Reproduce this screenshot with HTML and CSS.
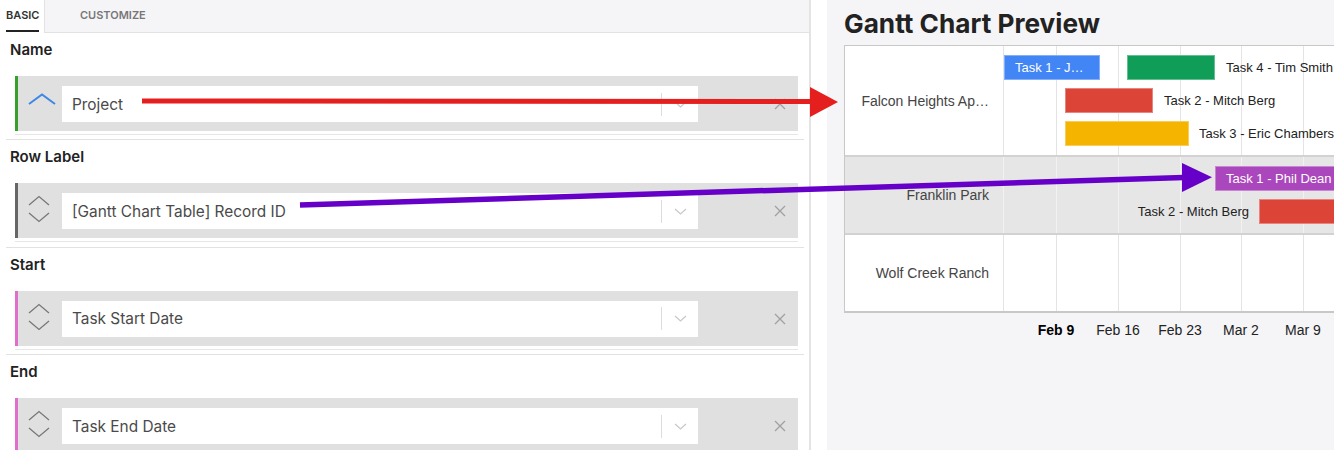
FILE: index.html
```html
<!DOCTYPE html>
<html lang="en">
<head>
  <meta charset="UTF-8">
  <title>Gantt Chart Settings</title>
  <link rel="stylesheet" href="styles.css">
</head>
<body>
  <div class="page">
    <section class="config">
      <nav class="tabs">
        <div class="tab tab-active"><span>BASIC</span></div>
        <div class="tab">CUSTOMIZE</div>
      </nav>

      <div class="field">
        <h3>Name</h3>
        <div class="slot-wrap">
          <div class="slot slot-green">
            <div class="handle handle-single">
              <svg width="28" height="12" viewBox="0 0 28 12"><path d="M1 11 L14 1.5 L27 11" fill="none" stroke="#3d87e6" stroke-width="2"/></svg>
            </div>
            <div class="select">
              <span class="select-value">Project</span>
              <span class="select-sep"></span>
              <span class="select-arrow"><svg width="13" height="7" viewBox="0 0 13 7"><path d="M1 1 L6.5 6 L12 1" fill="none" stroke="#c8c8c8" stroke-width="1.2"/></svg></span>
            </div>
            <div class="remove"><svg width="12" height="12" viewBox="0 0 12 12"><path d="M1 1 L11 11 M11 1 L1 11" stroke="#a0a0a0" stroke-width="1.3"/></svg></div>
          </div>
        </div>
      </div>

      <div class="field">
        <h3>Row Label</h3>
        <div class="slot-wrap">
          <div class="slot slot-gray">
            <div class="handle handle-double">
              <svg width="22" height="28" viewBox="0 0 22 28"><path d="M1 10 L11 1.5 L21 10 M1 18 L11 26.5 L21 18" fill="none" stroke="#777" stroke-width="1.3"/></svg>
            </div>
            <div class="select">
              <span class="select-value">[Gantt Chart Table] Record ID</span>
              <span class="select-sep"></span>
              <span class="select-arrow"><svg width="13" height="7" viewBox="0 0 13 7"><path d="M1 1 L6.5 6 L12 1" fill="none" stroke="#c8c8c8" stroke-width="1.2"/></svg></span>
            </div>
            <div class="remove"><svg width="12" height="12" viewBox="0 0 12 12"><path d="M1 1 L11 11 M11 1 L1 11" stroke="#a0a0a0" stroke-width="1.3"/></svg></div>
          </div>
        </div>
      </div>

      <div class="field">
        <h3>Start</h3>
        <div class="slot-wrap">
          <div class="slot slot-pink">
            <div class="handle handle-double">
              <svg width="22" height="28" viewBox="0 0 22 28"><path d="M1 10 L11 1.5 L21 10 M1 18 L11 26.5 L21 18" fill="none" stroke="#777" stroke-width="1.3"/></svg>
            </div>
            <div class="select">
              <span class="select-value">Task Start Date</span>
              <span class="select-sep"></span>
              <span class="select-arrow"><svg width="13" height="7" viewBox="0 0 13 7"><path d="M1 1 L6.5 6 L12 1" fill="none" stroke="#c8c8c8" stroke-width="1.2"/></svg></span>
            </div>
            <div class="remove"><svg width="12" height="12" viewBox="0 0 12 12"><path d="M1 1 L11 11 M11 1 L1 11" stroke="#a0a0a0" stroke-width="1.3"/></svg></div>
          </div>
        </div>
      </div>

      <div class="field">
        <h3>End</h3>
        <div class="slot-wrap">
          <div class="slot slot-pink">
            <div class="handle handle-double">
              <svg width="22" height="28" viewBox="0 0 22 28"><path d="M1 10 L11 1.5 L21 10 M1 18 L11 26.5 L21 18" fill="none" stroke="#777" stroke-width="1.3"/></svg>
            </div>
            <div class="select">
              <span class="select-value">Task End Date</span>
              <span class="select-sep"></span>
              <span class="select-arrow"><svg width="13" height="7" viewBox="0 0 13 7"><path d="M1 1 L6.5 6 L12 1" fill="none" stroke="#c8c8c8" stroke-width="1.2"/></svg></span>
            </div>
            <div class="remove"><svg width="12" height="12" viewBox="0 0 12 12"><path d="M1 1 L11 11 M11 1 L1 11" stroke="#a0a0a0" stroke-width="1.3"/></svg></div>
          </div>
        </div>
      </div>
    </section>

    <div class="gutter"></div>

    <section class="preview">
      <h1>Gantt Chart Preview</h1>
      <div class="gantt">
        <div class="gantt-row row-tall">
          <div class="gantt-label">Falcon Heights Ap…</div>
          <div class="gantt-track">
            <div class="grid-line" style="left:52px"></div>
            <div class="grid-line" style="left:114px"></div>
            <div class="grid-line" style="left:176px"></div>
            <div class="grid-line" style="left:237px"></div>
            <div class="grid-line" style="left:299px"></div>
            <div class="bar bar-blue" style="left:0;top:9px;width:96px">Task 1 - J…</div>
            <div class="bar bar-green" style="left:123px;top:9px;width:88px"></div>
            <div class="bar-text" style="left:222px;top:9px">Task 4 - Tim Smith</div>
            <div class="bar bar-red" style="left:61px;top:42px;width:88px"></div>
            <div class="bar-text" style="left:160px;top:42px">Task 2 - Mitch Berg</div>
            <div class="bar bar-yellow" style="left:61px;top:75px;width:124px"></div>
            <div class="bar-text" style="left:195px;top:75px">Task 3 - Eric Chambers</div>
          </div>
        </div>
        <div class="gantt-row row-shaded">
          <div class="gantt-label">Franklin Park</div>
          <div class="gantt-track">
            <div class="grid-line" style="left:52px"></div>
            <div class="grid-line" style="left:114px"></div>
            <div class="grid-line" style="left:176px"></div>
            <div class="grid-line" style="left:237px"></div>
            <div class="grid-line" style="left:299px"></div>
            <div class="bar bar-purple" style="left:211px;top:9px;width:160px">Task 1 - Phil Dean</div>
            <div class="bar bar-red" style="left:255px;top:42px;width:120px"></div>
            <div class="bar-text bar-text-before" style="left:255px;top:42px">Task 2 - Mitch Berg</div>
          </div>
        </div>
        <div class="gantt-row">
          <div class="gantt-label">Wolf Creek Ranch</div>
          <div class="gantt-track">
            <div class="grid-line" style="left:52px"></div>
            <div class="grid-line" style="left:114px"></div>
            <div class="grid-line" style="left:176px"></div>
            <div class="grid-line" style="left:237px"></div>
            <div class="grid-line" style="left:299px"></div>
          </div>
        </div>
      </div>
      <div class="gantt-axis">
        <span class="tick tick-major" style="left:53px">Feb 9</span>
        <span class="tick" style="left:115px">Feb 16</span>
        <span class="tick" style="left:177px">Feb 23</span>
        <span class="tick" style="left:238px">Mar 2</span>
        <span class="tick" style="left:300px">Mar 9</span>
      </div>
    </section>

    <!-- callout arrows drawn over the screenshot -->
    <svg class="annotations" width="1334" height="450" viewBox="0 0 1334 450">
      <line x1="142" y1="101" x2="812" y2="101.5" stroke="#e51e1e" stroke-width="5"/>
      <polygon points="810,87 838,102 810,117" fill="#e51e1e"/>
      <line x1="300" y1="205" x2="1184" y2="177.6" stroke="#6600c9" stroke-width="5.5"/>
      <polygon points="1182,163 1212,177.3 1182,192" fill="#6600c9"/>
    </svg>
  </div>
</body>
</html>
```

FILE: styles.css
```css
body {
  margin: 0;
  font-family: 'Inter', 'Noto Sans', sans-serif;
  color: #222;
  background: #fff;
  overflow: hidden;
}
.page {
  position: relative;
  display: flex;
  width: 1334px;
  height: 450px;
  overflow: hidden;
}
.config {
  width: 809px;
  flex-shrink: 0;
  border-right: 2px solid #e4e4e4;
}
.tabs {
  display: flex;
  height: 33px;
  box-sizing: border-box;
  background: #f5f5f7;
  border-bottom: 1px solid #e2e2e2;
}
.tab {
  font-size: 11px;
  font-weight: 600;
  color: #777;
  line-height: 14px;
  padding: 8px 0 0 35px;
}
.tab-active {
  width: 45px;
  box-sizing: border-box;
  padding: 8px 0 0 6px;
  height: 33px;
  margin-bottom: -1px;
  background: #fff;
  border-right: 1px solid #e2e2e2;
  color: #333;
}
.tab-active span {
  display: inline-block;
  padding-bottom: 8px;
  border-bottom: 2px solid #222;
}
.field {
  margin: 0 5px 0 6px;
  padding-bottom: 4.4px;
  border-bottom: 1px solid #e2e2e2;
}
.field h3 {
  margin: 0;
  padding: 7px 0 0 4px;
  font-size: 15px;
  font-weight: 600;
  line-height: 20px;
  color: #222;
}
.slot-wrap {
  margin: 16px 6px 0 9px;
  padding-bottom: 3px;
  border-bottom: 1px solid #e6e6e6;
}
.slot {
  display: flex;
  align-items: flex-start;
  height: 55px;
  box-sizing: border-box;
  background: #e0e0e0;
  border-left: 3px solid #666;
}
.slot-green { border-left-color: #36a12a; }
.slot-gray { border-left-color: #666; }
.slot-pink { border-left-color: #e06fcb; }
.handle {
  width: 44px;
  flex-shrink: 0;
  box-sizing: border-box;
  padding-left: 10px;
}
.handle svg { display: block; }
.handle-single { margin-top: 17px; }
.handle-double { margin-top: 12px; }
.select {
  display: flex;
  align-items: center;
  width: 636px;
  height: 36px;
  margin-top: 10px;
  background: #fff;
}
.select-value {
  flex: 1;
  padding-left: 10px;
  font-size: 15.4px;
  color: #4a4a4a;
}
.select-sep {
  width: 1px;
  height: 23px;
  background: #dcdcdc;
}
.select-arrow {
  width: 36px;
  display: flex;
  justify-content: center;
}
.select-arrow svg { display: block; }
.remove {
  display: flex;
  align-items: center;
  height: 36px;
  margin-top: 10px;
  padding-left: 76px;
}
.remove svg { display: block; }
.gutter {
  width: 16px;
  flex-shrink: 0;
  background: #fff;
}
.preview {
  flex: 1;
  min-width: 0;
  padding-left: 17px;
  background: #f5f5f7;
  overflow: hidden;
}
.preview h1 {
  margin: 9px 0 6px;
  font-size: 26.2px;
  font-weight: 700;
  line-height: 30px;
  color: #222;
  white-space: nowrap;
}
.gantt {
  width: 640px;
  background: #fff;
  border: 1px solid #c8c8c8;
  border-right: none;
  border-bottom: 2px solid #c8c8c8;
  font-family: 'Liberation Sans', Arial, sans-serif;
}
.gantt-row {
  display: flex;
  height: 76px;
}
.gantt-row + .gantt-row {
  border-top: 2px solid #d2d2d2;
}
.row-tall { height: 109px; }
.row-shaded { background: #e6e6e6; }
.gantt-label {
  width: 158px;
  flex-shrink: 0;
  box-sizing: border-box;
  padding: 0 14px;
  align-self: center;
  text-align: right;
  font-size: 14px;
  color: #444;
  white-space: nowrap;
  overflow: hidden;
}
.gantt-track {
  position: relative;
  flex: 1;
  border-left: 1px solid #e4e4e4;
}
.row-shaded .gantt-track { border-left-color: #f2f2f2; }
.grid-line {
  position: absolute;
  top: 0;
  bottom: 0;
  width: 1px;
  background: #e4e4e4;
}
.row-shaded .grid-line { background: #f2f2f2; }
.bar {
  position: absolute;
  height: 25px;
  box-sizing: border-box;
  border: 1px solid rgba(255, 255, 255, 0.35);
  padding-left: 10px;
  font-size: 13px;
  line-height: 23px;
  color: #fff;
  white-space: nowrap;
  overflow: hidden;
}
.bar-blue { background: #4285f4; }
.bar-green { background: #0f9d58; }
.bar-red { background: #db4437; }
.bar-yellow { background: #f4b400; }
.bar-purple { background: #ab47bc; }
.bar-text {
  position: absolute;
  font-size: 13px;
  line-height: 25px;
  color: #222;
  white-space: nowrap;
}
.bar-text-before {
  transform: translateX(calc(-100% - 10px));
}
.gantt-axis {
  position: relative;
  height: 40px;
  margin-left: 159px;
  font-family: 'Liberation Sans', Arial, sans-serif;
}
.tick {
  position: absolute;
  top: 9px;
  font-size: 14px;
  line-height: 16px;
  color: #222;
  transform: translateX(-50%);
  white-space: nowrap;
}
.tick-major {
  font-weight: 700;
  color: #000;
}
.annotations {
  position: absolute;
  top: 0;
  left: 0;
  pointer-events: none;
}
```
